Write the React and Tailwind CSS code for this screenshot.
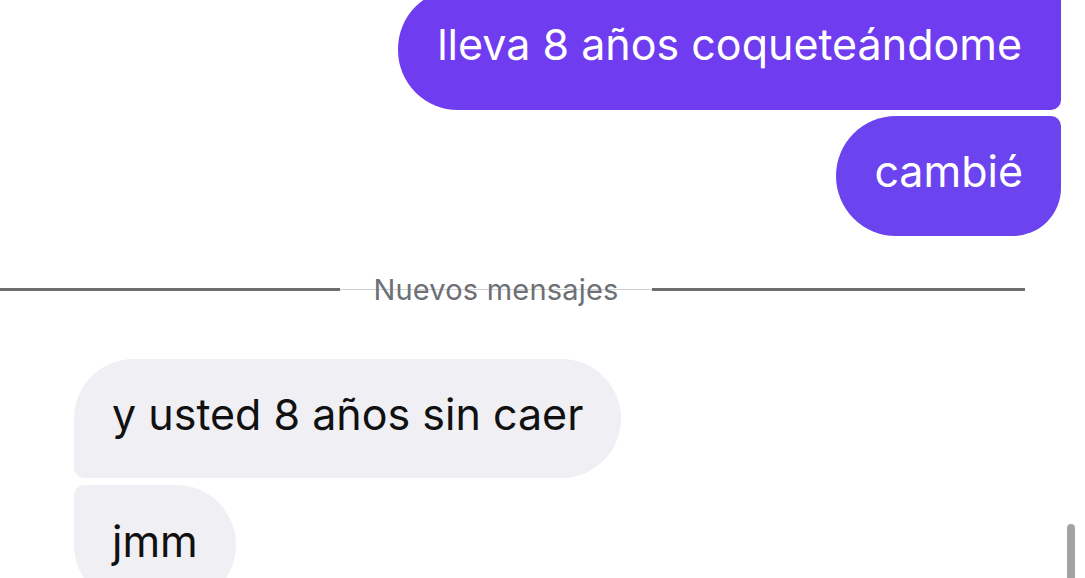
export default function App() {
  return (
    <div
      className="relative w-[1085px] h-[578px] overflow-hidden bg-white"
      style={{ fontFamily: 'Inter, "Noto Sans", sans-serif' }}
    >
      <div className="flex flex-col">
        {/* Outgoing */}
        <div className="flex flex-col items-end gap-[6px] pr-[24px] mt-[-11px]">
          <div className="h-[121px] flex items-center px-[39px] pb-[10px] bg-[#6f3cef] text-white text-[43px] rounded-tl-[60px] rounded-bl-[60px] rounded-tr-[10px] rounded-br-[10px]">
            lleva 8 años coqueteándome
          </div>
          <div className="h-[120px] flex items-center px-[38px] pb-[10px] bg-[#6b43ef] text-white text-[43px] rounded-tl-[60px] rounded-bl-[60px] rounded-tr-[10px] rounded-br-[48px]">
            cambié
          </div>
        </div>

        {/* Divider */}
        <div className="flex items-center mt-[40px] h-[26px]">
          <div className="w-[340px] h-[3px] bg-[#6e6e6e]" />
          <div className="relative w-[312px] flex items-center justify-center">
            <div className="absolute left-0 right-0 top-1/2 h-px bg-[#cfcfcf]" />
            <span className="relative text-[29px] leading-none tracking-[0.2px] text-[#6d7075]">Nuevos mensajes</span>
          </div>
          <div className="w-[373px] h-[3px] bg-[#6e6e6e]" />
        </div>

        {/* Incoming */}
        <div className="flex flex-col items-start gap-[7px] pl-[74px] mt-[57px]">
          <div className="h-[119px] flex items-center px-[38px] pb-[8px] bg-[#efeff4] text-[#111111] text-[43px] rounded-tl-[60px] rounded-bl-[10px] rounded-tr-[60px] rounded-br-[60px]">
            y usted 8 años sin caer
          </div>
          <div className="h-[120px] flex items-center px-[38px] pb-[8px] bg-[#efeff4] text-[#111111] text-[43px] rounded-tl-[10px] rounded-bl-[60px] rounded-tr-[60px] rounded-br-[60px]">
            jmm
          </div>
        </div>
      </div>

      {/* Scrollbar */}
      <div className="absolute left-[1067px] top-[524px] w-[8px] h-[60px] rounded-full bg-[#a3a3a3]" />
    </div>
  )
}
